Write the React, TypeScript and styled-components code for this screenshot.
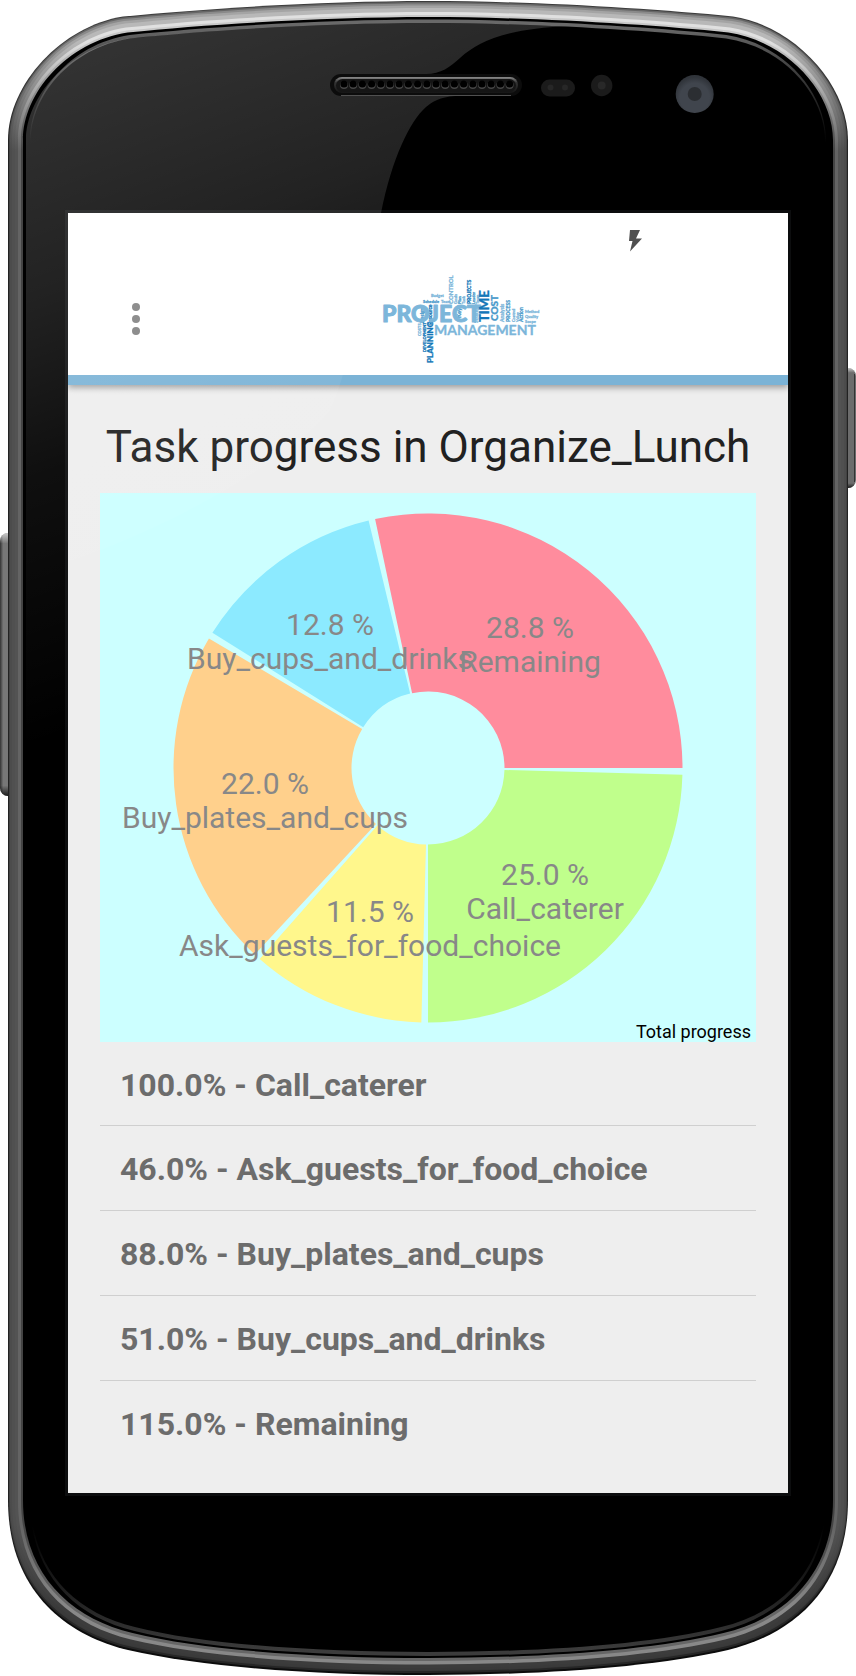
import React from "react";
import styled, { createGlobalStyle } from "styled-components";

const GlobalStyle = createGlobalStyle`
  *, *::before, *::after { box-sizing: border-box; }
  body { margin: 0; background: #fff; font-family: Roboto, "Noto Sans", sans-serif; }
`;

const Device = styled.div`
  position: relative;
  padding: 213px 68px 183px;
`;

const Overlay = styled.svg`
  position: absolute;
  inset: 0;
  width: 100%;
  height: 100%;
  pointer-events: none;
`;

const Screen = styled.div`
  position: relative;
  background: #eee;
  padding-bottom: 28px;
`;

const AppBar = styled.header`
  position: relative;
  background: #fff;
  border-bottom: 10px solid #7bb3d6;
  box-shadow: 0 3px 6px rgba(0, 0, 0, 0.32);
  clip-path: inset(0 0 -12px 0);
`;

const StatusBar = styled.div`
  display: flex;
  justify-content: flex-end;
  align-items: flex-end;
  height: 48px;
  padding: 0 144px 8px 0;
`;

const Toolbar = styled.div`
  display: grid;
  grid-template-columns: 312fr 408fr;
  align-items: center;
  height: 114px;
  padding-top: 2px;
`;

const MenuButton = styled.button`
  display: grid;
  place-items: center;
  width: 48px;
  height: 48px;
  margin-left: 44px;
  padding: 0;
  border: 0;
  background: none;
  cursor: pointer;
`;

const Content = styled.main`
  padding: 0 32px;
`;

const Title = styled.h1`
  margin: 0;
  padding: 16px 0 0;
  color: #212121;
  font-size: 44px;
  font-weight: 400;
  line-height: 92px;
  text-align: center;
  white-space: nowrap;
`;

const Chart = styled.svg`
  display: block;
  width: 100%;
  height: auto;
  background: #ccffff;
`;

const SliceLabel = styled.text`
  fill: #888;
  font-size: 30px;
  text-anchor: middle;
`;

const Legend = styled.text`
  fill: #000;
  font-size: 18px;
  text-anchor: end;
`;

const TaskList = styled.ul`
  margin: 0;
  padding: 0;
  list-style: none;
`;

const TaskRow = styled.li`
  height: 83px;
  padding: 3px 20px 0;
  color: #6c6c6c;
  font-size: 32px;
  font-weight: 700;
  line-height: 80px;
  white-space: nowrap;

  & + & {
    height: 85px;
    border-top: 1px solid #cfcfcf;
  }
`;

const LogoWord = styled.text<{ $size: number; $tone: string; $heavy?: boolean }>`
  fill: ${(p) => p.$tone};
  stroke: ${(p) => p.$tone};
  stroke-width: ${(p) => (p.$size > 20 ? 1 : 0.3)};
  stroke-linejoin: round;
  font-family: Lato, sans-serif;
  font-size: ${(p) => p.$size}px;
  font-weight: ${(p) => (p.$heavy ? 900 : 700)};
`;

/* Outline of the phone body, inset from its sides, top and bottom. */
function outline(s: number, t: number, b: number) {
  const l = 8 + s;
  const r = 848 - s;
  const k = s * 0.3;
  return [
    `M${l} 140`,
    `C${l} ${84 + t * 0.6} ${62 + k} ${26 + t} ${123 + k} ${16.5 + t}`,
    `C210 ${8 + t} 330 ${1 + t} 428 ${1 + t}`,
    `C526 ${1 + t} 646 ${8 + t} ${733 - k} ${16.5 + t}`,
    `C${794 - k} ${26 + t} ${r} ${84 + t * 0.6} ${r} 140`,
    `V1500`,
    `C${r} ${1590 - b} ${791 - k} ${1635 - b} ${728 - k} ${1650 - b}`,
    `C650 ${1668 - b} 536 ${1675 - b} 428 ${1675 - b}`,
    `C320 ${1675 - b} 206 ${1668 - b} ${128 + k} ${1650 - b}`,
    `C${65 + k} ${1635 - b} ${l} ${1590 - b} ${l} 1500Z`,
  ].join("");
}

const RIM = [
  { s: 0, t: 0, b: 0, top: "#3c3c3c", side: "#222", bottom: "#0c0c0c" },
  { s: 1, t: 1, b: 2, top: "#666", side: "#424242", bottom: "#262626" },
  { s: 2, t: 2.5, b: 4, top: "#8a8a8a", side: "#4c4c4c", bottom: "#383838" },
  { s: 4, t: 4.5, b: 5, top: "#a4a4a4", side: "#505050", bottom: "#3a3a3a" },
  { s: 7, t: 7, b: 7, top: "#b8b8b8", side: "#535353", bottom: "#3c3c3c" },
  { s: 10, t: 11, b: 10.5, top: "#e0e0e0", side: "#646464", bottom: "#888" },
  { s: 13, t: 14, b: 14, top: "#c8c8c8", side: "#444", bottom: "#666" },
];

function Shell() {
  return (
    <Overlay viewBox="0 0 856 1676" preserveAspectRatio="none" aria-hidden="true">
      <defs>
        {RIM.map((r, i) => (
          <linearGradient key={i} id={`rim${i}`} gradientUnits="userSpaceOnUse" x1="0" y1="0" x2="0" y2="1676">
            <stop offset="0" stopColor={r.top} />
            <stop offset="0.025" stopColor={r.top} />
            <stop offset="0.09" stopColor={r.side} />
            <stop offset="0.91" stopColor={r.side} />
            <stop offset="0.96" stopColor={r.bottom} />
            <stop offset="1" stopColor={r.bottom} />
          </linearGradient>
        ))}
        <linearGradient id="edge" gradientUnits="userSpaceOnUse" x1="0" y1="0" x2="0" y2="1676">
          <stop offset="0.015" stopColor="#696969" />
          <stop offset="0.035" stopColor="#4a4a4a" />
          <stop offset="0.085" stopColor="#000" />
          <stop offset="0.91" stopColor="#000" />
          <stop offset="0.97" stopColor="#2e2e2e" />
          <stop offset="0.985" stopColor="#3c3c3c" />
        </linearGradient>
        <linearGradient id="key" x1="0" x2="1" y1="0" y2="0">
          <stop offset="0" stopColor="#333" />
          <stop offset="0.2" stopColor="#777" />
          <stop offset="0.75" stopColor="#777" />
          <stop offset="1" stopColor="#444" />
        </linearGradient>
        <linearGradient id="keyEnds" x1="0" x2="0" y1="0" y2="1">
          <stop offset="0" stopColor="#eee" stopOpacity="0.7" />
          <stop offset="0.04" stopColor="#eee" stopOpacity="0" />
          <stop offset="0.96" stopColor="#111" stopOpacity="0" />
          <stop offset="1" stopColor="#111" stopOpacity="0.9" />
        </linearGradient>
      </defs>
      <rect x="0" y="533" width="16" height="263" rx="8" fill="url(#key)" />
      <rect x="0" y="533" width="16" height="263" rx="8" fill="url(#keyEnds)" />
      <rect x="840" y="368" width="16" height="120" rx="8" fill="#6c6c6c" />
      <rect x="854" y="374" width="1" height="108" fill="#333" />
      <rect x="840" y="368" width="16" height="120" rx="8" fill="url(#keyEnds)" />
      {RIM.map((r, i) => (
        <path key={i} d={outline(r.s, r.t, r.b)} fill={`url(#rim${i})`} />
      ))}
      <path d={outline(15, 16, 17)} fill="#000" />
      <path d={outline(22, 18.5, 19)} fill="url(#edge)" />
      <path d={outline(23, 22, 23)} fill="#000" />
      <rect x="66.5" y="211.5" width="723" height="1283" fill="none" stroke="#0c0d0e" strokeWidth="3" />
    </Overlay>
  );
}

function GlassAndSensors() {
  const holes = Array.from({ length: 19 }, (_, i) => 344 + i * 9.2);
  return (
    <Overlay viewBox="0 0 856 1676" preserveAspectRatio="none" aria-hidden="true">
      <defs>
        <linearGradient id="glare" gradientUnits="userSpaceOnUse" x1="110" y1="40" x2="330" y2="640">
          <stop offset="0" stopColor="#fff" stopOpacity="0.2" />
          <stop offset="0.33" stopColor="#fff" stopOpacity="0.135" />
          <stop offset="0.6" stopColor="#fff" stopOpacity="0.06" />
          <stop offset="1" stopColor="#fff" stopOpacity="0" />
        </linearGradient>
        <clipPath id="glass">
          <path d={outline(18, 22, 23)} />
        </clipPath>
        <linearGradient id="lip" x1="0" x2="0" y1="0" y2="1">
          <stop offset="0" stopColor="#8a8a8a" />
          <stop offset="0.35" stopColor="#333" />
          <stop offset="1" stopColor="#161616" />
        </linearGradient>
        <radialGradient id="lens" cx="0.5" cy="0.6" r="0.55">
          <stop offset="0.7" stopColor="#40454d" />
          <stop offset="1" stopColor="#30343a" />
        </radialGradient>
      </defs>
      <path
        clipPath="url(#glass)"
        fill="url(#glare)"
        d="M0 0H620V25C520 24 484 36 460 58C450 67 441 74 426 74V96H455C440 97 432 102 426 107C410 121 392 158 381 213C362 275 352 365 330 410C300 450 190 520 68 562V740H0Z"
      />
      <rect x="330" y="74" width="192" height="22" rx="11" fill="#0c0c0c" />
      <path d="M341 95.5H511" stroke="#505050" strokeWidth="1" />
      <rect x="334" y="77" width="184" height="16" rx="8" fill="url(#lip)" />
      <rect x="336" y="79" width="180" height="13" rx="6.5" fill="#151515" />
      {holes.map((x) => (
        <g key={x}>
          <circle cx={x} cy="85" r="4" fill="#484848" />
          <circle cx={x} cy="84" r="3.6" fill="#000" />
        </g>
      ))}
      <rect x="541" y="79.5" width="34" height="17" rx="8.5" fill="#1b1b1b" />
      <circle cx="550.5" cy="87.5" r="3" fill="#272727" />
      <circle cx="565" cy="87.5" r="3" fill="#272727" />
      <circle cx="601.7" cy="85.5" r="10.7" fill="#1b1b1b" />
      <circle cx="601.7" cy="85.5" r="4" fill="#282828" />
      <circle cx="694.7" cy="94" r="19" fill="url(#lens)" />
      <circle cx="694.7" cy="94" r="7" fill="#2b2e32" />
    </Overlay>
  );
}

const LIGHT = "#7cb6da";
const DARK = "#1377b8";
const MID = "#4b9bcb";

type Word = { text: string; x: number; y: number; size: number; tone: string; up?: boolean; heavy?: boolean };

const LOGO: Word[] = [
  { text: "Budget", x: 431, y: 297, size: 4, tone: LIGHT },
  { text: "Schedule", x: 423, y: 303, size: 4, tone: MID },
  { text: "Team", x: 441, y: 303, size: 4, tone: LIGHT },
  { text: "Design", x: 424, y: 323, size: 5, tone: MID, up: true },
  { text: "Resource", x: 432, y: 325, size: 5, tone: DARK, up: true },
  { text: "Goals", x: 457, y: 304, size: 4, tone: LIGHT, up: true },
  { text: "Plan", x: 461, y: 304, size: 4, tone: MID, up: true },
  { text: "Task", x: 465, y: 304, size: 4, tone: LIGHT, up: true },
  { text: "Key", x: 461, y: 318, size: 6, tone: MID, up: true },
  { text: "Leader", x: 475, y: 304, size: 4, tone: MID, up: true },
  { text: "Team", x: 479, y: 304, size: 4, tone: LIGHT, up: true },
  { text: "Strategy", x: 478, y: 323, size: 5, tone: LIGHT, up: true },
  { text: "Analysis", x: 504, y: 322, size: 5, tone: LIGHT, up: true },
  { text: "Control", x: 515, y: 322, size: 4, tone: LIGHT, up: true },
  { text: "Value", x: 519, y: 322, size: 4, tone: LIGHT, up: true },
  { text: "Action", x: 523, y: 322, size: 5, tone: MID, up: true },
  { text: "Method", x: 525, y: 313, size: 4, tone: LIGHT },
  { text: "Quality", x: 525, y: 318, size: 4, tone: LIGHT },
  { text: "Scope", x: 525, y: 323, size: 4, tone: LIGHT },
  { text: "CONTROL", x: 453, y: 304, size: 6, tone: LIGHT, up: true },
  { text: "PROJECTS", x: 471, y: 304, size: 5, tone: DARK, up: true },
  { text: "PROCESS", x: 510, y: 322, size: 5, tone: MID, up: true },
  { text: "COSTS", x: 421, y: 336, size: 4, tone: LIGHT, up: true },
  { text: "DEVELOPMENT", x: 426, y: 352, size: 4, tone: DARK, up: true },
  { text: "PLANNING", x: 433, y: 363, size: 8, tone: DARK, up: true, heavy: true },
  { text: "PROJECT", x: 382, y: 322, size: 23, tone: LIGHT, heavy: true },
  { text: "MANAGEMENT", x: 434, y: 335, size: 14, tone: LIGHT },
  { text: "TIME", x: 489, y: 322, size: 13, tone: DARK, up: true, heavy: true },
  { text: "COST", x: 498, y: 321, size: 10, tone: MID, up: true, heavy: true },
];

function Logo() {
  return (
    <svg width="165" height="104" viewBox="380 267 165 104" role="img" aria-label="Project management">
      {LOGO.map((w, i) => (
        <LogoWord
          key={i}
          $size={w.size}
          $tone={w.tone}
          $heavy={w.heavy}
          x={w.x}
          y={w.y}
          transform={w.up ? `rotate(-90 ${w.x} ${w.y})` : undefined}
        >
          {w.text}
        </LogoWord>
      ))}
    </svg>
  );
}

const SLICES = [
  { name: "Call_caterer", share: "25.0 %", from: 1.5, to: 90, color: "#c0ff8c", x: 445, y: 392 },
  { name: "Ask_guests_for_food_choice", share: "11.5 %", from: 91.5, to: 131.4, color: "#fff78c", x: 270, y: 429 },
  { name: "Buy_plates_and_cups", share: "22.0 %", from: 132.9, to: 210.6, color: "#ffd08c", x: 165, y: 301 },
  { name: "Buy_cups_and_drinks", share: "12.8 %", from: 212.1, to: 256.5, color: "#8ceaff", x: 230, y: 142 },
  { name: "Remaining", share: "28.8 %", from: 258, to: 360, color: "#ff8c9d", x: 430, y: 145 },
];

function slicePath(from: number, to: number) {
  const at = (deg: number, r: number) => {
    const a = (deg * Math.PI) / 180;
    return `${(328 + r * Math.cos(a)).toFixed(2)} ${(275 + r * Math.sin(a)).toFixed(2)}`;
  };
  return `M${at(from, 254.5)}A254.5 254.5 0 0 1 ${at(to, 254.5)}L${at(to, 76.5)}A76.5 76.5 0 0 0 ${at(from, 76.5)}Z`;
}

const TASKS = [
  "100.0% - Call_caterer",
  "46.0% - Ask_guests_for_food_choice",
  "88.0% - Buy_plates_and_cups",
  "51.0% - Buy_cups_and_drinks",
  "115.0% - Remaining",
];

export default function App() {
  return (
    <>
      <GlobalStyle />
      <Device>
        <Shell />
        <Screen>
          <AppBar>
            <StatusBar>
              <svg width="17" height="24" viewBox="0 0 17 24" aria-label="Charging" role="img">
                <path d="M3 1H13L9 9.500H15L3 22.500L5.500 12H2Z" fill="#505050" />
              </svg>
            </StatusBar>
            <Toolbar>
              <MenuButton type="button" aria-label="Open menu">
                <svg width="10" height="34" viewBox="0 0 10 34" fill="#808080" aria-hidden="true">
                  <circle cx="5" cy="5" r="4" />
                  <circle cx="5" cy="17" r="4" />
                  <circle cx="5" cy="29" r="4" />
                </svg>
              </MenuButton>
              <Logo />
            </Toolbar>
          </AppBar>
          <Content>
            <Title>Task progress in Organize_Lunch</Title>
            <Chart viewBox="0 0 656 549" role="img" aria-label="Total progress by task">
              {SLICES.map((s) => (
                <path key={s.name} d={slicePath(s.from, s.to)} fill={s.color} />
              ))}
              {SLICES.map((s) => (
                <g key={s.name}>
                  <SliceLabel x={s.x} y={s.y}>{s.share}</SliceLabel>
                  <SliceLabel x={s.x} y={s.y + 34}>{s.name}</SliceLabel>
                </g>
              ))}
              <Legend x="651" y="545">Total progress</Legend>
            </Chart>
            <TaskList>
              {TASKS.map((task) => (
                <TaskRow key={task}>{task}</TaskRow>
              ))}
            </TaskList>
          </Content>
        </Screen>
        <GlassAndSensors />
      </Device>
    </>
  );
}
